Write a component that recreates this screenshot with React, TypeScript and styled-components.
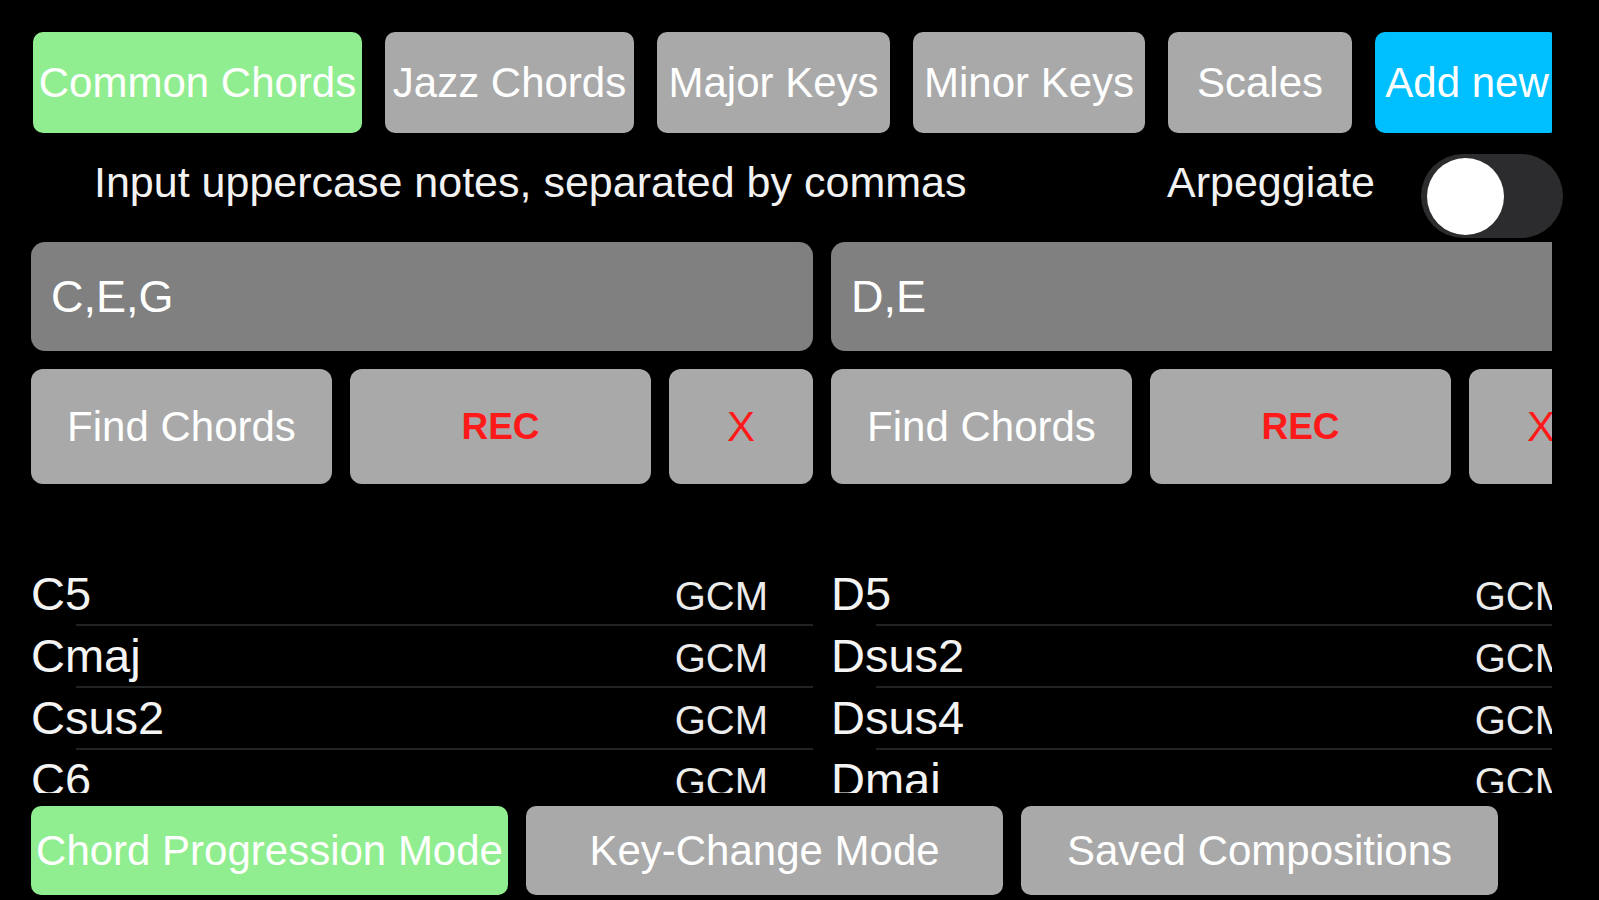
import styled, { createGlobalStyle } from 'styled-components';

const GlobalStyle = createGlobalStyle`
  html, body {
    margin: 0;
    padding: 0;
    background: #000;
    overflow: hidden;
  }
  * {
    box-sizing: border-box;
  }
`;

const colors = {
  green: '#90ee90',
  gray: '#a9a9a9',
  field: '#808080',
  blue: '#00bfff',
  red: '#ff1a1a',
  white: '#ffffff',
  track: '#2c2c2e',
  separator: '#232323',
};

type Tone = 'green' | 'gray' | 'blue';

const toneColor = (tone: Tone) => (tone === 'green' ? colors.green : tone === 'blue' ? colors.blue : colors.gray);

const Screen = styled.div`
  width: 1599px;
  height: 900px;
  background: #000;
  color: ${colors.white};
  font-family: 'Liberation Sans', Arial, Helvetica, sans-serif;
  padding-top: 32px;
  display: flex;
  flex-direction: column;
`;

const TabBar = styled.div`
  display: flex;
  gap: 23px;
  margin-left: 33px;
  width: 1519px;
  height: 101px;
  overflow: hidden;
  flex-shrink: 0;
`;

const TabButton = styled.button<{ $tone: Tone; $w: number }>`
  flex: 0 0 ${(p) => p.$w}px;
  height: 101px;
  border: none;
  border-radius: 10px;
  background: ${(p) => toneColor(p.$tone)};
  color: ${colors.white};
  font-family: inherit;
  font-size: 42px;
  white-space: nowrap;
  padding: 0;
  display: flex;
  align-items: center;
  justify-content: center;
`;

const OptionsRow = styled.div`
  display: flex;
  align-items: flex-start;
  height: 107px;
  padding: 21px 36px 0 94px;
  flex-shrink: 0;
`;

const Hint = styled.div`
  flex: 1;
  font-size: 43px;
  line-height: 56px;
  color: #f2f2f2;
  white-space: nowrap;
`;

const SwitchLabel = styled.div`
  font-size: 43px;
  line-height: 56px;
  color: #f2f2f2;
`;

const Switch = styled.div<{ $on: boolean }>`
  margin-left: 46px;
  width: 142px;
  height: 84px;
  border-radius: 42px;
  background: ${(p) => (p.$on ? colors.green : colors.track)};
  padding: 4px;
  display: flex;
  justify-content: ${(p) => (p.$on ? 'flex-end' : 'flex-start')};
`;

const Knob = styled.div`
  width: 77px;
  height: 77px;
  border-radius: 50%;
  background: #fff;
  margin-left: 2px;
`;

const Workspace = styled.div`
  margin-left: 31px;
  width: 1521px;
  overflow: hidden;
  flex-shrink: 0;
  margin-top: 2px;
`;

const Columns = styled.div`
  display: flex;
  gap: 18px;
`;

const Column = styled.div`
  flex: 0 0 782px;
  display: flex;
  flex-direction: column;
`;

const NotesField = styled.input`
  width: 100%;
  height: 109px;
  border: none;
  outline: none;
  border-radius: 14px;
  background: ${colors.field};
  color: ${colors.white};
  font-family: inherit;
  font-size: 45px;
  padding: 0 20px;
`;

const ActionRow = styled.div`
  display: grid;
  grid-template-columns: 301px 301px 144px;
  gap: 18px;
  margin-top: 18px;
  height: 115px;
`;

const ActionButton = styled.button<{ $danger?: boolean; $bold?: boolean }>`
  border: none;
  border-radius: 12px;
  background: ${colors.gray};
  color: ${(p) => (p.$danger ? colors.red : colors.white)};
  font-family: inherit;
  font-size: ${(p) => (p.$bold ? 37 : 42)}px;
  font-weight: ${(p) => (p.$bold ? 700 : 400)};
  padding: 0;
  display: flex;
  align-items: center;
  justify-content: center;
`;

const ChordList = styled.div`
  margin-top: 79px;
  height: 230px;
  overflow: hidden;
`;

const ChordRow = styled.div`
  position: relative;
  height: 62px;
  display: flex;
  align-items: baseline;
  justify-content: space-between;
  padding-right: 45px;

  &::after {
    content: '';
    position: absolute;
    left: 45px;
    right: 0;
    bottom: -1px;
    height: 2px;
    background: ${colors.separator};
  }
`;

const ChordName = styled.span`
  font-size: 47px;
  line-height: 62px;
  color: #f4f4f4;
`;

const ChordSource = styled.span`
  font-size: 40px;
  color: #ececec;
`;

const ModeBar = styled.div`
  display: flex;
  gap: 18px;
  margin-top: 13px;
  padding-left: 31px;
  flex-shrink: 0;
`;

const ModeButton = styled.button<{ $active?: boolean }>`
  flex: 0 0 477px;
  height: 89px;
  border: none;
  border-radius: 10px;
  background: ${(p) => (p.$active ? colors.green : colors.gray)};
  color: ${colors.white};
  font-family: inherit;
  font-size: 42px;
  white-space: nowrap;
  padding: 0;
  display: flex;
  align-items: center;
  justify-content: center;
`;

const tabs: { label: string; tone: Tone; w: number }[] = [
  { label: 'Common Chords', tone: 'green', w: 329 },
  { label: 'Jazz Chords', tone: 'gray', w: 249 },
  { label: 'Major Keys', tone: 'gray', w: 233 },
  { label: 'Minor Keys', tone: 'gray', w: 232 },
  { label: 'Scales', tone: 'gray', w: 184 },
  { label: 'Add new', tone: 'blue', w: 184 },
];

const panels = [
  { notes: 'C,E,G', chords: ['C5', 'Cmaj', 'Csus2', 'C6'] },
  { notes: 'D,E', chords: ['D5', 'Dsus2', 'Dsus4', 'Dmaj'] },
];

function ChordPanel({ notes, chords }: { notes: string; chords: string[] }) {
  return (
    <Column>
      <NotesField defaultValue={notes} readOnly />
      <ActionRow>
        <ActionButton>Find Chords</ActionButton>
        <ActionButton $danger $bold>
          REC
        </ActionButton>
        <ActionButton $danger>X</ActionButton>
      </ActionRow>
      <ChordList>
        {chords.map((c) => (
          <ChordRow key={c}>
            <ChordName>{c}</ChordName>
            <ChordSource>GCM</ChordSource>
          </ChordRow>
        ))}
      </ChordList>
    </Column>
  );
}

export default function App() {
  return (
    <Screen>
      <GlobalStyle />
      <TabBar>
        {tabs.map((t) => (
          <TabButton key={t.label} $tone={t.tone} $w={t.w}>
            {t.label}
          </TabButton>
        ))}
      </TabBar>
      <OptionsRow>
        <Hint>Input uppercase notes, separated by commas</Hint>
        <SwitchLabel>Arpeggiate</SwitchLabel>
        <Switch $on={false}>
          <Knob />
        </Switch>
      </OptionsRow>
      <Workspace>
        <Columns>
          {panels.map((p) => (
            <ChordPanel key={p.notes} notes={p.notes} chords={p.chords} />
          ))}
        </Columns>
      </Workspace>
      <ModeBar>
        <ModeButton $active>Chord Progression Mode</ModeButton>
        <ModeButton>Key-Change Mode</ModeButton>
        <ModeButton>Saved Compositions</ModeButton>
      </ModeBar>
    </Screen>
  );
}
